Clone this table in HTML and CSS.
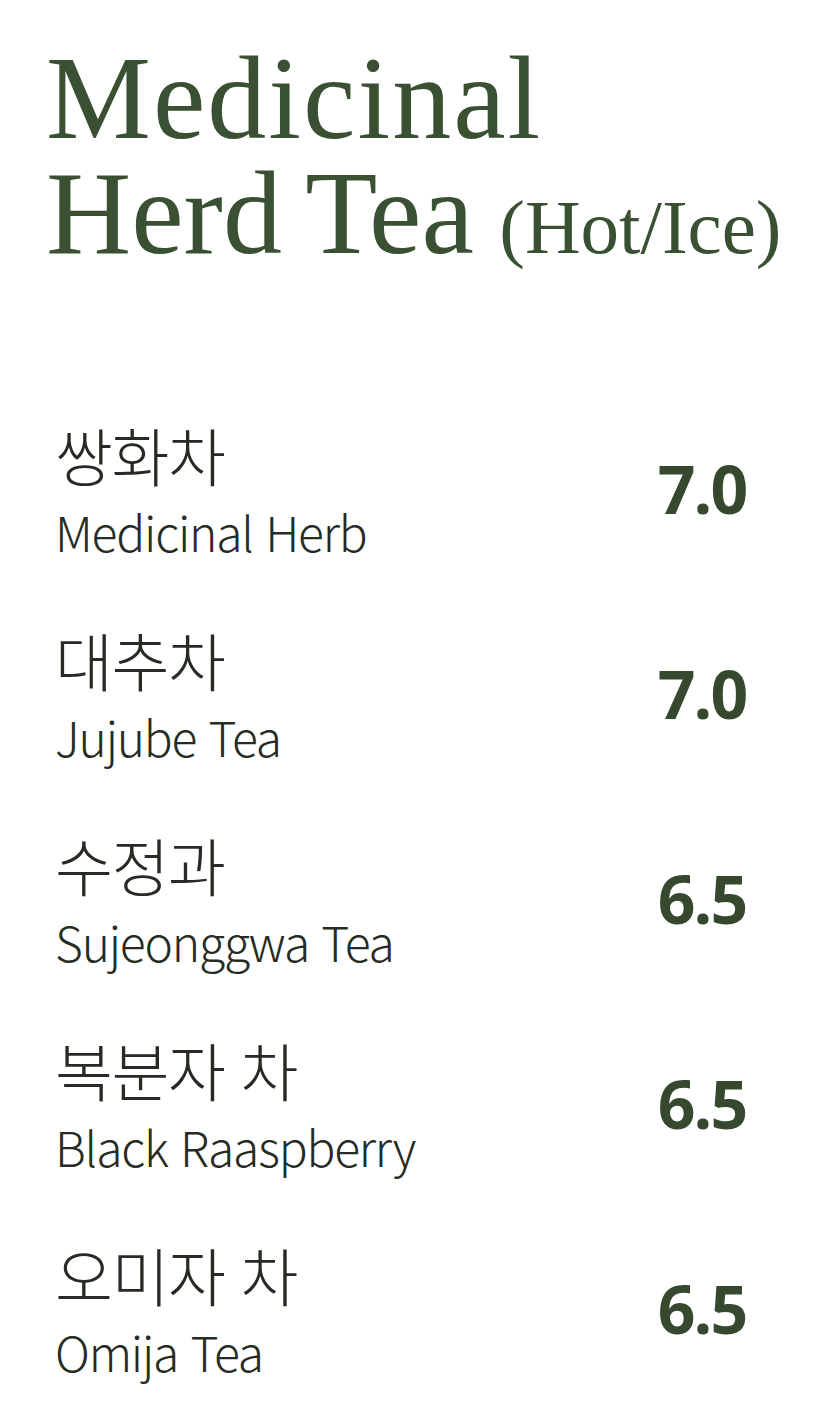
FILE: index.html
```html
<!DOCTYPE html>
<html lang="ko">
<head>
<meta charset="utf-8">
<title>Medicinal Herd Tea</title>
<link rel="stylesheet" href="styles.css">
</head>
<body>
<main class="menu">
  <h1 class="title">
    <span class="title-line title-line-first">Medicinal</span>
    <span class="title-line">Herd Tea <span class="title-sub">(Hot/Ice)</span></span>
  </h1>
  <ul class="items">
    <li class="item">
      <div class="names"><span class="ko">쌍화차</span><span class="en">Medicinal Herb</span></div>
      <span class="price">7.0</span>
    </li>
    <li class="item">
      <div class="names"><span class="ko">대추차</span><span class="en">Jujube Tea</span></div>
      <span class="price">7.0</span>
    </li>
    <li class="item">
      <div class="names"><span class="ko">수정과</span><span class="en">Sujeonggwa Tea</span></div>
      <span class="price">6.5</span>
    </li>
    <li class="item">
      <div class="names"><span class="ko">복분자 차</span><span class="en">Black Raaspberry</span></div>
      <span class="price">6.5</span>
    </li>
    <li class="item">
      <div class="names"><span class="ko">오미자 차</span><span class="en">Omija Tea</span></div>
      <span class="price">6.5</span>
    </li>
  </ul>
</main>
</body>
</html>
```
FILE: styles.css
```css
html, body {
  margin: 0;
  padding: 0;
  background: #ffffff;
}

.menu {
  width: 830px;
  height: 1408px;
  box-sizing: border-box;
  padding: 41px 0 0 0;
}

.title {
  margin: 0 0 0 46px;
  font-family: "Liberation Serif", "DejaVu Serif", serif;
  font-weight: 400;
  color: #3a5033;
  display: flex;
  flex-direction: column;
}

.title-line {
  display: block;
  font-size: 118px;
  line-height: 115px;
  letter-spacing: 0;
  word-spacing: -4px;
}

.title-line-first {
  letter-spacing: 2px;
}

.title-sub {
  font-size: 77px;
  line-height: 0;
  letter-spacing: 0;
  word-spacing: 0;
}

.items {
  list-style: none;
  margin: 0;
  padding: 143px 0 0 55px;
  display: flex;
  flex-direction: column;
}

.item {
  height: 205px;
  display: flex;
  align-items: flex-start;
}

.names {
  flex: 1;
  display: flex;
  flex-direction: column;
  color: #262b23;
}

.ko {
  font-family: "Noto Sans CJK KR", sans-serif;
  font-size: 63px;
  font-weight: 300;
  letter-spacing: -1.5px;
  line-height: 80px;
}

.en {
  font-family: "Noto Sans CJK KR", sans-serif;
  font-size: 48px;
  font-weight: 300;
  letter-spacing: -1.2px;
  line-height: 74px;
}

.price {
  width: 120px;
  margin-right: 68px;
  margin-top: 29px;
  text-align: center;
  font-family: "Open Sans", sans-serif;
  font-weight: 700;
  font-size: 66px;
  letter-spacing: -2px;
  line-height: 90px;
  color: #36492f;
}
```
